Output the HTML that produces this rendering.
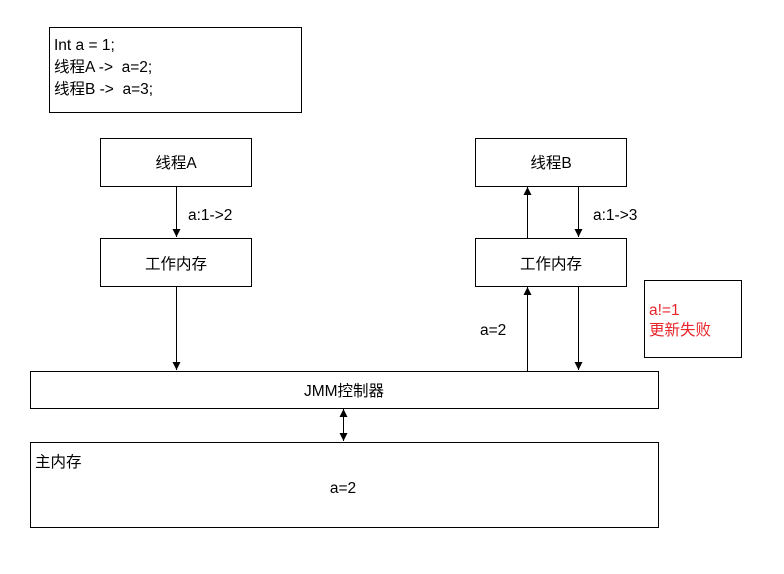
<!DOCTYPE html>
<html><head><meta charset="utf-8"><style>
html,body{margin:0;padding:0;background:#fff;}
svg text{font-family:"Liberation Sans","Noto Sans CJK SC",sans-serif;font-size:15.5px;fill:#000;white-space:pre;}
</style></head><body>
<svg width="784" height="569" xmlns="http://www.w3.org/2000/svg" xml:space="preserve">
<defs>
<marker id="a" viewBox="0 0 10 10" refX="10" refY="5" markerWidth="9" markerHeight="8" orient="auto-start-reverse" markerUnits="userSpaceOnUse"><path d="M0,0 L10,5 L0,10 z" fill="#000"/></marker></defs>
<g fill="#fff" stroke="#000" stroke-width="1">
<rect x="49.5" y="27.5" width="252" height="85"/>
<rect x="100.5" y="138.5" width="151" height="48"/>
<rect x="100.5" y="238.5" width="151" height="48"/>
<rect x="475.5" y="138.5" width="151" height="48"/>
<rect x="475.5" y="238.5" width="151" height="48"/>
<rect x="644.5" y="280.5" width="97" height="77"/>
<rect x="30.5" y="371.5" width="628" height="37"/>
<rect x="30.5" y="442.5" width="628" height="85"/>
</g>
<g stroke="#000" stroke-width="1" marker-end="url(#a)">
<line x1="176.5" y1="186" x2="176.5" y2="237"/>
<line x1="176.5" y1="286" x2="176.5" y2="370"/>
<line x1="527.5" y1="238" x2="527.5" y2="187"/>
<line x1="578.5" y1="186" x2="578.5" y2="237"/>
<line x1="527.5" y1="371" x2="527.5" y2="287"/>
<line x1="578.5" y1="286" x2="578.5" y2="370"/>
<line x1="343.5" y1="409" x2="343.5" y2="441" marker-start="url(#a)"/>
</g>
<text x="54" y="50">Int a = 1;</text>
<text x="54" y="72">线程A -&gt;  a=2;</text>
<text x="54" y="94">线程B -&gt;  a=3;</text>
<text x="176" y="168" text-anchor="middle">线程A</text>
<text x="176" y="269" text-anchor="middle">工作内存</text>
<text x="551" y="168" text-anchor="middle">线程B</text>
<text x="551" y="269" text-anchor="middle">工作内存</text>
<text x="188" y="220">a:1-&gt;2</text>
<text x="593" y="220">a:1-&gt;3</text>
<text x="480" y="335">a=2</text>
<text x="649" y="315" style="fill:#e8262b">a!=1</text>
<text x="649" y="335" style="fill:#e8262b">更新失败</text>
<text x="344" y="396" text-anchor="middle">JMM控制器</text>
<text x="35" y="467">主内存</text>
<text x="343" y="493" text-anchor="middle">a=2</text>
</svg>
</body></html>
